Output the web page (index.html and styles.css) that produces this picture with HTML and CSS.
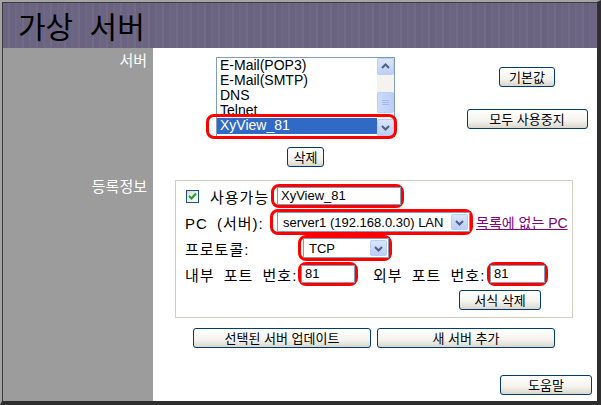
FILE: index.html
```html
<!DOCTYPE html>
<html lang="ko">
<head>
    <meta charset="UTF-8">
    <title>가상 서버</title>
    <link rel="stylesheet" href="styles.css">
</head>
<body>
<div class="window">
    <div class="inner">
        <header class="title-bar"><h1>가상 서버</h1></header>
        <div class="layout">
            <div class="side">서버</div>
            <div class="main server-section">
                <div class="list-col">
                    <div class="listbox">
                        <div class="items">
                            <div class="item">E-Mail(POP3)</div>
                            <div class="item">E-Mail(SMTP)</div>
                            <div class="item">DNS</div>
                            <div class="item">Telnet</div>
                            <div class="item selected">XyView_81</div>
                        </div>
                        <div class="scrollbar">
                            <div class="sb-btn">
                                <svg width="15" height="15" viewBox="0 0 15 15"><path d="M4 9 L7.5 5.5 L11 9" fill="none" stroke="#4d6185" stroke-width="2"/></svg>
                            </div>
                            <div class="sb-track">
                                <div class="sb-thumb">
                                    <svg width="7" height="7" viewBox="0 0 7 7"><path d="M0 1.5 H7 M0 3.5 H7 M0 5.5 H7" stroke="#a4b7ec" stroke-width="1"/></svg>
                                </div>
                            </div>
                            <div class="sb-btn">
                                <svg width="15" height="15" viewBox="0 0 15 15"><path d="M4 6 L7.5 9.5 L11 6" fill="none" stroke="#4d6185" stroke-width="2"/></svg>
                            </div>
                        </div>
                        <span class="mark mark-list"></span>
                    </div>
                    <button class="btn btn-del">삭제</button>
                </div>
                <div class="action-col">
                    <button class="btn btn-default">기본값</button>
                    <button class="btn btn-disable">모두 사용중지</button>
                </div>
            </div>

            <div class="side side-reg">등록정보</div>
            <div class="main reg-section">
                <div class="fieldset">
                    <div class="row">
                        <span class="checkbox">
                            <svg width="11" height="11" viewBox="0 0 11 11"><path d="M2 5 L4.5 7.5 L9 2.5" fill="none" stroke="#21a121" stroke-width="2"/></svg>
                        </span>
                        <span class="lbl lbl-enable">사용가능</span>
                        <span class="mark mark-name"><span class="input input-name">XyView_81</span></span>
                    </div>
                    <div class="row">
                        <span class="lbl lbl-pc">PC (서버):</span>
                        <span class="mark mark-pc">
                            <span class="select select-pc">
                                <span class="select-text">server1 (192.168.0.30) LAN</span>
                                <span class="drop"><svg width="15" height="15" viewBox="0 0 15 15"><path d="M4 6 L7.5 9.5 L11 6" fill="none" stroke="#4d6185" stroke-width="2"/></svg></span>
                            </span>
                        </span>
                        <a class="link" href="#">목록에 없는 PC</a>
                    </div>
                    <div class="row">
                        <span class="lbl lbl-wide">프로토콜:</span>
                        <span class="mark mark-proto">
                            <span class="select select-proto">
                                <span class="select-text">TCP</span>
                                <span class="drop"><svg width="15" height="15" viewBox="0 0 15 15"><path d="M4 6 L7.5 9.5 L11 6" fill="none" stroke="#4d6185" stroke-width="2"/></svg></span>
                            </span>
                        </span>
                    </div>
                    <div class="row">
                        <span class="lbl lbl-wide">내부 포트 번호:</span>
                        <span class="mark mark-port"><span class="input input-port">81</span></span>
                        <span class="lbl lbl-ext">외부 포트 번호:</span>
                        <span class="mark mark-port"><span class="input input-port2">81</span></span>
                    </div>
                    <div class="row row-end">
                        <button class="btn btn-clear">서식 삭제</button>
                    </div>
                </div>
                <div class="btn-row">
                    <button class="btn btn-wide">선택된 서버 업데이트</button>
                    <button class="btn btn-wide">새 서버 추가</button>
                </div>
            </div>

            <div class="side"></div>
            <div class="main help-row">
                <button class="btn btn-help">도움말</button>
            </div>
        </div>
    </div>
</div>
</body>
</html>
```

FILE: styles.css
```css
body {
    margin: 0;
    font-family: "Liberation Sans", "Noto Sans CJK KR", sans-serif;
    background: #fff;
}
.window {
    width: 601px;
    height: 405px;
    box-sizing: border-box;
    border-top: 2px solid #a4a4a4;
    border-left: 2px solid #a4a4a4;
    border-right: 4px solid #2e2e2e;
    border-bottom: 4px solid #2e2e2e;
}
.inner {
    height: 100%;
    box-sizing: border-box;
    border-top: 1px solid #3c3c3c;
    border-left: 1px solid #3c3c3c;
    display: flex;
    flex-direction: column;
}
.title-bar {
    height: 45px;
    flex: none;
    background: repeating-linear-gradient(90deg, #6b6581 0 5px, #716b87 5px 7px, #69637f 7px 12px, #6e6884 12px 14px);
}
.title-bar h1 {
    margin: 0;
    padding: 2px 0 0 15px;
    font-family: "Noto Sans CJK KR", sans-serif;
    font-weight: 400;
    font-size: 30px;
    line-height: 40px;
    word-spacing: 8px;
    color: #000;
}
.layout {
    flex: 1;
    display: grid;
    grid-template-columns: 150px 1fr;
    grid-template-rows: auto auto 1fr;
}
.side {
    background: #9c9c9c;
    color: #fff;
    font-size: 15px;
    line-height: 18px;
    text-align: right;
    padding: 4px 6px 0 0;
}
.side-reg {
    padding-top: 3px;
}
.main {
    background: #fff;
}

/* server list */
.server-section {
    display: flex;
    padding: 9px 0 8px 63px;
}
.list-col {
    width: 179px;
    display: flex;
    flex-direction: column;
    align-items: center;
    gap: 10px;
}
.listbox {
    position: relative;
    width: 179px;
    height: 80px;
    box-sizing: border-box;
    border: 1px solid #7f9db9;
    display: flex;
}
.items {
    flex: 1;
    font-size: 14px;
    overflow: hidden;
}
.item {
    height: 15px;
    line-height: 15px;
    padding-left: 3px;
    color: #000;
    white-space: nowrap;
}
.item.selected {
    height: 16px;
    line-height: 15px;
    background: #316ac5;
    color: #fff;
}
.scrollbar {
    width: 17px;
    display: flex;
    flex-direction: column;
    background: #f4f3ee;
}
.sb-btn,
.drop {
    height: 17px;
    box-sizing: border-box;
    border: 1px solid #b9cdf5;
    border-radius: 2px;
    background: linear-gradient(#dbe6fd, #bccdf7);
    display: flex;
    align-items: center;
    justify-content: center;
}
.sb-track {
    flex: 1;
}
.sb-thumb {
    margin-top: 17px;
    height: 21px;
    box-sizing: border-box;
    border: 1px solid #b9cdf5;
    border-radius: 2px;
    background: linear-gradient(90deg, #cddbfc, #bccdf7);
    display: flex;
    align-items: center;
    justify-content: center;
}
.mark {
    display: inline-flex;
    align-items: center;
    border: 3px solid #f00;
    border-radius: 8px;
}
.mark-list {
    position: absolute;
    left: -11px;
    top: 56px;
    width: 191px;
    height: 25px;
    box-sizing: border-box;
}
.action-col {
    width: 120px;
    margin-left: 72px;
    padding-top: 10px;
    display: flex;
    flex-direction: column;
    align-items: center;
    gap: 22px;
}

/* buttons */
.btn {
    height: 20px;
    padding: 0;
    font-family: "Noto Sans CJK KR", sans-serif;
    font-size: 13px;
    line-height: 18px;
    color: #000;
    border: 1px solid #003c74;
    border-radius: 3px;
    background: linear-gradient(#ffffff, #f4f3ee 60%, #d9d6cb);
}
.btn-del { width: 37px; }
.btn-default { width: 56px; }
.btn-disable { width: 121px; }
.btn-clear { width: 82px; }
.btn-wide { width: 178px; }
.btn-help { width: 92px; }

/* registration */
.reg-section {
    padding: 5px 0 0 22px;
}
.fieldset {
    width: 398px;
    height: 138px;
    box-sizing: border-box;
    border: 1px solid #d0d0bf;
    padding: 2px 0 0 9px;
}
.row {
    height: 26px;
    display: flex;
    align-items: center;
    font-size: 15px;
    color: #000;
    white-space: nowrap;
}
.row-end {
    justify-content: flex-end;
    padding-right: 31px;
}
.checkbox {
    width: 13px;
    height: 13px;
    box-sizing: border-box;
    margin-left: 1px;
    border: 1px solid #1c5180;
    background: linear-gradient(135deg, #dcdcd7, #fff);
    display: flex;
    align-items: center;
    justify-content: center;
}
.lbl {
    display: inline-block;
    word-spacing: 4px;
    letter-spacing: 1px;
}
.lbl-enable {
    width: 61px;
    margin-left: 11px;
}
.lbl-pc { width: 85px; }
.lbl-wide { width: 113px; }
.lbl-ext {
    width: 114px;
    margin-left: 15px;
}
.input {
    height: 18px;
    box-sizing: border-box;
    border: 1px solid #7f9db9;
    background: #fff;
    font-size: 13px;
    line-height: 16px;
    padding-left: 3px;
}
.mark-name { padding-left: 3px; }
.input-name { width: 124px; }
.mark-port { padding-left: 0; }
.input-port { width: 54px; }
.input-port2 { width: 55px; }
.select {
    height: 20px;
    box-sizing: border-box;
    border: 1px solid #7f9db9;
    background: #fff;
    display: flex;
    align-items: center;
    padding: 1px;
    font-size: 13px;
}
.select-text {
    flex: 1;
    padding-left: 4px;
}
.select .drop {
    width: 17px;
    height: 16px;
}
.mark-pc { padding-left: 4px; }
.select-pc { width: 193px; }
.mark-proto { padding-left: 2px; }
.select-proto { width: 86px; }
.link {
    margin-left: 3px;
    font-size: 14px;
    color: #800080;
}
.btn-row {
    width: 398px;
    margin-top: 10px;
    display: flex;
    justify-content: center;
    gap: 6px;
}
.help-row {
    display: flex;
    justify-content: flex-end;
    align-items: flex-start;
    padding: 27px 5px 0 0;
}
```
